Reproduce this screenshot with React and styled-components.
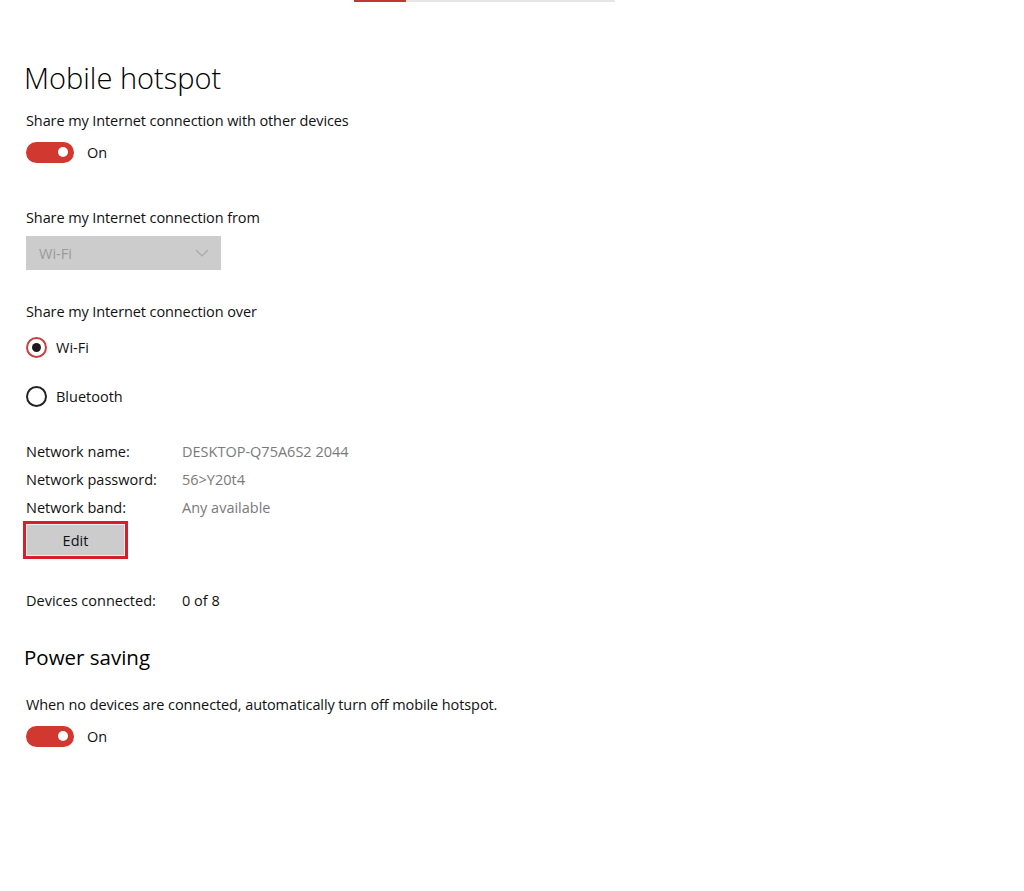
import React from 'react';
import styled, { createGlobalStyle } from 'styled-components';

const GlobalStyle = createGlobalStyle`
  body {
    margin: 0;
    background: #ffffff;
    font-family: 'Open Sans', 'Noto Sans', sans-serif;
    color: #111111;
  }
`;

const Page = styled.div`
  width: 1024px;
  min-height: 891px;
  background: #ffffff;
`;

const ScrollBar = styled.div`
  display: flex;
  margin-left: 354px;
  width: 261px;
  height: 2px;
  background: #e6e6e6;
`;

const ScrollThumb = styled.div`
  width: 52px;
  height: 100%;
  background: #c0392f;
`;

const Content = styled.div`
  padding-left: 26px;
  display: flex;
  flex-direction: column;
  align-items: flex-start;
  font-size: 14.5px;
`;

const Title = styled.h1`
  margin: 56px 0 0 -2px;
  font-size: 29px;
  line-height: 40px;
  font-weight: 300;
  color: #000;
`;

const SubTitle = styled.h2`
  margin: ${(p) => p.$mt}px 0 0 -2px;
  font-size: 20.5px;
  line-height: 30px;
  font-weight: 400;
  color: #000;
`;

const Label = styled.div`
  margin-top: ${(p) => p.$mt}px;
  line-height: 20px;
  letter-spacing: -0.1px;
`;

const ToggleRow = styled.div`
  margin-top: ${(p) => p.$mt}px;
  display: flex;
  align-items: center;
  gap: 13px;
  height: 22px;
`;

const Toggle = styled.div`
  width: 48px;
  height: 21px;
  border-radius: 11px;
  background: #d1382f;
  display: flex;
  align-items: center;
  justify-content: flex-end;
  padding-right: 6px;
  box-sizing: border-box;
`;

const Knob = styled.span`
  width: 10px;
  height: 10px;
  border-radius: 50%;
  background: #fff;
`;

const Dropdown = styled.div`
  margin-top: 8px;
  width: 195px;
  height: 34px;
  background: #cccccc;
  display: flex;
  align-items: center;
  justify-content: space-between;
  padding: 0 12px 0 13px;
  box-sizing: border-box;
  color: #9a9a9a;
`;

const RadioRow = styled.div`
  margin-top: ${(p) => p.$mt}px;
  display: flex;
  align-items: center;
  gap: 9px;
  height: 24px;
`;

const Radio = styled.span`
  width: 21px;
  height: 21px;
  border-radius: 50%;
  box-sizing: border-box;
  border: 2px solid ${(p) => (p.$checked ? '#c8413b' : '#222')};
  display: flex;
  align-items: center;
  justify-content: center;
  &::after {
    content: '';
    display: ${(p) => (p.$checked ? 'block' : 'none')};
    width: 9px;
    height: 9px;
    border-radius: 50%;
    background: #1a1a1a;
  }
`;

const InfoGrid = styled.div`
  margin-top: ${(p) => p.$mt}px;
  display: grid;
  grid-template-columns: 156px auto;
  grid-auto-rows: 28px;
  align-items: center;
`;

const Value = styled.span`
  color: ${(p) => (p.$muted ? '#7a7a7a' : '#111')};
`;

const EditFrame = styled.div`
  margin: 0 0 0 -3px;
  padding: 1px;
  border: 3px solid #d61f2c;
  background: #eee;
`;

const EditButton = styled.button`
  width: 97px;
  height: 30px;
  border: none;
  background: #cccccc;
  font-family: inherit;
  font-size: 14.5px;
  color: #111;
  display: block;
`;

export default function App() {
  return (
    <Page>
      <GlobalStyle />
      <ScrollBar>
        <ScrollThumb />
      </ScrollBar>
      <Content>
        <Title>Mobile hotspot</Title>
        <Label $mt={13}>Share my Internet connection with other devices</Label>
        <ToggleRow $mt={10}>
          <Toggle>
            <Knob />
          </Toggle>
          On
        </ToggleRow>

        <Label $mt={45}>Share my Internet connection from</Label>
        <Dropdown>
          Wi-Fi
          <svg width="14" height="8" viewBox="0 0 14 8" fill="none">
            <path d="M1 1l6 6 6-6" stroke="#a8a8a8" strokeWidth="1.1" />
          </svg>
        </Dropdown>

        <Label $mt={32}>Share my Internet connection over</Label>
        <RadioRow $mt={13}>
          <Radio $checked />
          Wi-Fi
        </RadioRow>
        <RadioRow $mt={25}>
          <Radio />
          Bluetooth
        </RadioRow>

        <InfoGrid $mt={29}>
          <span>Network name:</span>
          <Value $muted>DESKTOP-Q75A6S2 2044</Value>
          <span>Network password:</span>
          <Value $muted>56&gt;Y20t4</Value>
          <span>Network band:</span>
          <Value $muted>Any available</Value>
        </InfoGrid>
        <EditFrame>
          <EditButton>Edit</EditButton>
        </EditFrame>

        <InfoGrid $mt={27}>
          <span>Devices connected:</span>
          <Value>0 of 8</Value>
        </InfoGrid>

        <SubTitle $mt={28}>Power saving</SubTitle>
        <Label $mt={23}>When no devices are connected, automatically turn off mobile hotspot.</Label>
        <ToggleRow $mt={10}>
          <Toggle>
            <Knob />
          </Toggle>
          On
        </ToggleRow>
      </Content>
    </Page>
  );
}
